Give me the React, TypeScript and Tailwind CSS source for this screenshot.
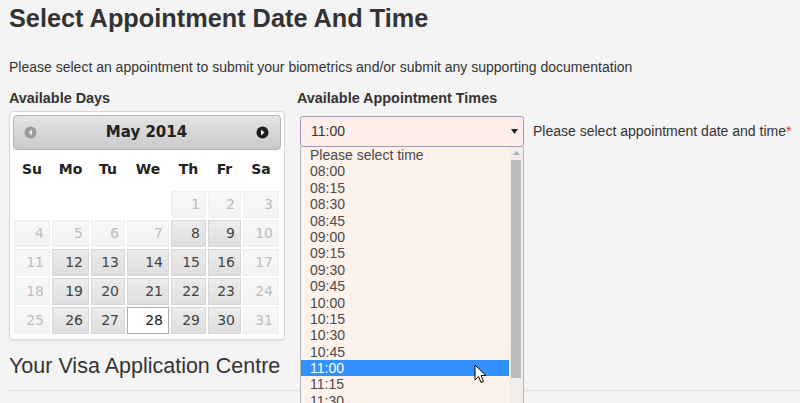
import React from "react";

type Cell = { d: number; s: "dis" | "en" | "act" } | null;

const weeks: Cell[][] = [
  [null, null, null, null, { d: 1, s: "dis" }, { d: 2, s: "dis" }, { d: 3, s: "dis" }],
  [{ d: 4, s: "dis" }, { d: 5, s: "dis" }, { d: 6, s: "dis" }, { d: 7, s: "dis" }, { d: 8, s: "en" }, { d: 9, s: "en" }, { d: 10, s: "dis" }],
  [{ d: 11, s: "dis" }, { d: 12, s: "en" }, { d: 13, s: "en" }, { d: 14, s: "en" }, { d: 15, s: "en" }, { d: 16, s: "en" }, { d: 17, s: "dis" }],
  [{ d: 18, s: "dis" }, { d: 19, s: "en" }, { d: 20, s: "en" }, { d: 21, s: "en" }, { d: 22, s: "en" }, { d: 23, s: "en" }, { d: 24, s: "dis" }],
  [{ d: 25, s: "dis" }, { d: 26, s: "en" }, { d: 27, s: "en" }, { d: 28, s: "act" }, { d: 29, s: "en" }, { d: 30, s: "en" }, { d: 31, s: "dis" }],
];

const days = ["Su", "Mo", "Tu", "We", "Th", "Fr", "Sa"];

const times = [
  "Please select time",
  "08:00", "08:15", "08:30", "08:45",
  "09:00", "09:15", "09:30", "09:45",
  "10:00", "10:15", "10:30", "10:45",
  "11:00", "11:15", "11:30", "11:45",
];

function DayCell({ c }: { c: Cell }) {
  if (!c) return <div className="h-[27px]" />;
  const base =
    "h-[27px] flex items-center justify-end pr-[5px] text-[14px] border";
  if (c.s === "act")
    return <div className={base + " bg-white border-[#aaaaaa] text-[#212121]"}>{c.d}</div>;
  if (c.s === "en")
    return (
      <div className={base + " bg-gradient-to-b from-[#ececec] to-[#dedede] border-[#d6d6d6] text-[#444444]"}>
        {c.d}
      </div>
    );
  return (
    <div className={base + " bg-gradient-to-b from-[#ececec] to-[#dedede] border-[#d6d6d6] text-[#444444] opacity-35"}>
      {c.d}
    </div>
  );
}

export default function App() {
  return (
    <div className="h-[403px] w-[800px] overflow-hidden bg-[#f4f4f4] pl-[9px] font-['Liberation_Sans',Arial,sans-serif] text-[#333333]">
      <h1 className="mt-[3px] text-[25.3px] font-bold leading-[30px] text-[#333333]">
        Select Appointment Date And Time
      </h1>
      <p className="mt-[24px] text-[14px] leading-[20px]">
        Please select an appointment to submit your biometrics and/or submit any supporting documentation
      </p>
      <div className="mt-[11px] flex gap-[12px]">
        {/* Left column */}
        <div className="w-[276px]">
          <div className="text-[14.4px] font-bold leading-[20px]">Available Days</div>
          <div className="mt-[3px] rounded-[4px] border border-[#d9d9d9] bg-white p-[3px] pb-[5px] font-['DejaVu_Sans',Verdana,sans-serif] shadow-[0_1px_2px_rgba(0,0,0,0.08)]">
            <div className="flex h-[35px] items-center justify-between rounded-[4px] border border-[#b4b4b4] bg-gradient-to-b from-[#e4e4e4] to-[#c9c9c9] pl-[10px] pr-[11px]">
              <svg width="13" height="13" viewBox="0 0 13 13">
                <circle cx="6.5" cy="6.5" r="6" fill="#9a9a9a" />
                <path d="M8 3.5 L4.5 6.5 L8 9.5 Z" fill="#e8e8e8" />
              </svg>
              <span className="text-[15px] font-bold text-[#222222]">May 2014</span>
              <svg width="13" height="13" viewBox="0 0 13 13">
                <circle cx="6.5" cy="6.5" r="6" fill="#1e1e1e" />
                <path d="M5 3.5 L8.5 6.5 L5 9.5 Z" fill="#ffffff" />
              </svg>
            </div>
            <div className="ml-[1px] grid grid-cols-[36px_37px_34px_42px_35px_33px_36px] gap-x-[2px]">
              {days.map((d) => (
                <div key={d} className="flex h-[39px] items-center justify-center text-[14px] font-bold text-[#222222]">
                  {d}
                </div>
              ))}
            </div>
            <div className="ml-[1px] mt-[2px] grid grid-cols-[36px_37px_34px_42px_35px_33px_36px] gap-[2px]">
              {weeks.flat().map((c, i) => (
                <DayCell key={i} c={c} />
              ))}
            </div>
          </div>
        </div>

        {/* Right column */}
        <div className="flex-1">
          <div className="text-[14.4px] font-bold leading-[20px]">Available Appointment Times</div>
          <div className="ml-[3px] mt-[8px] flex items-center gap-[9px]">
            <div className="relative w-[224px]">
              <div className="flex h-[31px] items-center justify-between rounded-[3px] border border-[#a696c8] bg-[#fdeee9] pl-[10px] pr-[5px] text-[14px] text-[#333333]">
                <span>11:00</span>
                <svg width="7" height="5" viewBox="0 0 7 5">
                  <path d="M0 0 L7 0 L3.5 5 Z" fill="#222222" />
                </svg>
              </div>
              {/* Open dropdown list */}
              <div className="absolute left-0 top-[31px] z-10 flex h-[260px] w-[224px] border-x border-[#b5b5b5] bg-[#fdf1eb]">
                <div className="relative flex-1">
                  {times.map((t) => (
                    <div
                      key={t}
                      className={
                        "h-[16.4px] pl-[9px] text-[14px] leading-[16.4px] " +
                        (t === "11:00" ? "bg-[#3390ff] text-white" : "text-[#4a4a4a]")
                      }
                    >
                      {t}
                    </div>
                  ))}
                  {/* mouse cursor */}
                  <svg className="absolute left-[173px] top-[217px]" width="13" height="20" viewBox="0 0 13 20">
                    <path d="M1 1 L1 16 L4.5 12.5 L7 18.5 L9.5 17.5 L7 11.5 L12 11.5 Z" fill="#ffffff" stroke="#000000" strokeWidth="1" strokeLinejoin="round" />
                  </svg>
                </div>
                <div className="flex w-[14px] flex-col items-center bg-[#f1eeec]">
                  <svg className="mt-[4px]" width="7" height="4" viewBox="0 0 7 4">
                    <path d="M0 4 L3.5 0 L7 4 Z" fill="#b0b0b0" />
                  </svg>
                  <div className="mt-[5px] h-[218px] w-[10px] bg-[#bcbcbc]" />
                </div>
              </div>
            </div>
            <div className="text-[14px] text-[#333333]">
              Please select appointment date and time<span className="text-[#e03030]">*</span>
            </div>
          </div>
        </div>
      </div>
      <h2 className="mt-[12px] text-[21.5px] leading-[28px] text-[#333333]">Your Visa Application Centre</h2>
      <div className="mt-[10px] border-t border-[#e2e2e2]" />
    </div>
  );
}
